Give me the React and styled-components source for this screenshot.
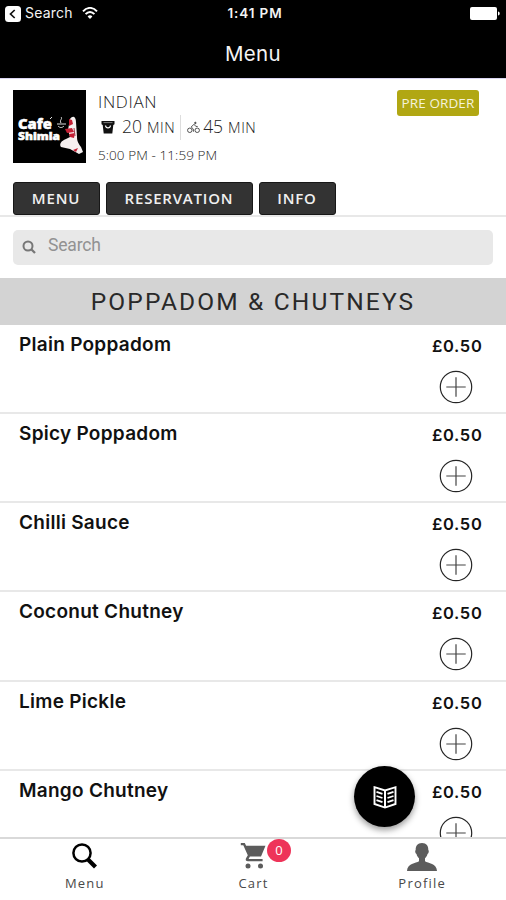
import React from "react";
import styled, { createGlobalStyle } from "styled-components";

const Global = createGlobalStyle`
  * { box-sizing: border-box; }
  html, body { margin: 0; padding: 0; background: #fff; overflow: hidden; }
`;

const Screen = styled.div`
  width: 506px;
  height: 900px;
  display: flex;
  flex-direction: column;
  overflow: hidden;
  background: #fff;
  color: #222;
  font-family: "Open Sans", sans-serif;
`;

const Header = styled.header`
  height: 79px;
  flex: none;
  background: #000;
  border-bottom: 1px solid #d9d5f2;
  color: #f4f4f4;
  font-family: Inter, sans-serif;
`;

const StatusBar = styled.div`
  height: 26px;
  display: grid;
  grid-template-columns: 1fr auto 1fr;
  align-items: center;
  padding: 0 6px 0 5px;
`;

const StatusLeft = styled.div`
  display: flex;
  align-items: center;
  line-height: 24px;
  svg { flex: none; }
`;

const BackLabel = styled.span`
  margin: 0 9px 1px 4px;
  font-size: 14px;
  letter-spacing: 0.2px;
`;

const Clock = styled.div`
  padding-left: 5px;
  font-size: 13.5px;
  font-weight: 600;
  line-height: 27px;
  letter-spacing: 0.9px;
`;

const StatusRight = styled.div`
  display: flex;
  justify-content: flex-end;
`;

const Title = styled.h1`
  margin: 0;
  font-size: 20.5px;
  font-weight: 400;
  line-height: 55px;
  letter-spacing: 0.35px;
  text-align: center;
`;

const Restaurant = styled.section`
  height: 103px;
  flex: none;
  display: flex;
  align-items: flex-start;
  padding: 11px 27px 0 13px;
`;

const Details = styled.div`
  flex: 1;
  padding-left: 12px;
`;

const Cuisine = styled.div`
  font-size: 17px;
  font-weight: 300;
  line-height: 24px;
  letter-spacing: 0.65px;
`;

const Times = styled.div`
  height: 26px;
  display: flex;
  align-items: center;
  padding-left: 3px;
  font-weight: 300;
`;

const Duration = styled.span`
  font-size: 17.5px;
  line-height: 26px;
  margin-left: ${(p) => p.$gap}px;
  small { font-size: 14.5px; margin-left: 5px; letter-spacing: 0.5px; }
`;

const Divider = styled.span`
  width: 1px;
  height: 25px;
  margin: 0 6px 0 5px;
  background: #ddd;
`;

const Hours = styled.div`
  padding-top: 5px;
  font-size: 13.5px;
  line-height: 20px;
  font-weight: 300;
  letter-spacing: 0.08px;
`;

const PreOrder = styled.span`
  width: 82px;
  height: 26px;
  border-radius: 3px;
  background: #b1a713;
  color: #f5f3dc;
  font-size: 13.5px;
  line-height: 27px;
  letter-spacing: 0.1px;
  text-align: center;
`;

const Tabs = styled.nav`
  height: 35px;
  flex: none;
  display: flex;
  gap: 6px;
  padding-left: 13px;
  border-bottom: 2px solid #e8e8e8;
`;

const Tab = styled.button`
  width: ${(p) => p.$width}px;
  height: 33px;
  padding: 0 1px 0 0;
  border: 1px solid #171717;
  border-radius: 3px;
  background: #333;
  color: #f0f0f0;
  font: 600 15px/31px "Open Sans", sans-serif;
  letter-spacing: 0.8px;
`;

const SearchBar = styled.label`
  height: 35px;
  flex: none;
  display: flex;
  align-items: center;
  margin: 13px 13px;
  padding-left: 9px;
  border-radius: 5px;
  background: #e8e8e8;
  svg { margin-bottom: 2px; }
`;

const SearchInput = styled.input`
  width: 400px;
  height: 29px;
  margin: 0 0 5px 12px;
  padding: 0;
  border: 0;
  outline: 0;
  background: transparent;
  font: 400 17.5px/29px Roboto, sans-serif;
  letter-spacing: -0.15px;
  &::placeholder { color: #929292; opacity: 1; }
`;

const Category = styled.h2`
  height: 46.6px;
  flex: none;
  margin: 0;
  background: #d3d3d3;
  color: #292929;
  font: 400 24.5px/47px Roboto, sans-serif;
  letter-spacing: 2.15px;
  text-align: center;
`;

const List = styled.main`
  flex: 1;
  min-height: 0;
  overflow: hidden;
`;

const Row = styled.article`
  height: 89.3px;
  display: flex;
  justify-content: space-between;
  padding: 5px 24px 0 19px;
  border-bottom: 2px solid #e8e8e8;
  font-family: Inter, sans-serif;
  color: #111;
`;

const Name = styled.h3`
  margin: 0;
  font-size: 19px;
  font-weight: 600;
  line-height: 29px;
  letter-spacing: 0.27px;
`;

const Purchase = styled.div`
  width: 51px;
  display: flex;
  flex-direction: column;
  align-items: flex-start;
`;

const Price = styled.span`
  padding-left: 1px;
  font-size: 16.5px;
  font-weight: 600;
  line-height: 33px;
  letter-spacing: 0.65px;
`;

const AddButton = styled.button`
  width: 34px;
  height: 34px;
  margin: 7px 0 0 8px;
  padding: 0;
  border: 0;
  background: none;
  svg { display: block; }
`;

const Fab = styled.button`
  position: absolute;
  left: 354px;
  top: 766px;
  width: 61px;
  height: 61px;
  display: grid;
  place-items: center;
  padding: 0;
  border: 0;
  border-radius: 50%;
  background: #000;
  box-shadow: 0 3px 6px rgba(0, 0, 0, 0.4);
`;

const BottomBar = styled.nav`
  height: 63px;
  flex: none;
  display: grid;
  grid-template-columns: repeat(3, 1fr);
  border-top: 2px solid #d9d9d9;
`;

const NavItem = styled.a`
  display: flex;
  flex-direction: column;
  align-items: center;
  padding-top: 4px;
  color: ${(p) => (p.$active ? "#000" : "#5c5c5c")};
`;

const NavLabel = styled.span`
  margin-top: -1px;
  padding-left: 1px;
  font-size: 13px;
  line-height: 20px;
  letter-spacing: 1.2px;
  color: #484848;
`;

const IconSlot = styled.span`
  position: relative;
  height: 31px;
  svg { display: block; }
`;

const Badge = styled.span`
  position: absolute;
  left: 27px;
  top: -4px;
  width: 24px;
  height: 23px;
  border-radius: 50%;
  background: #ee3459;
  color: #fff;
  font-size: 13px;
  line-height: 23px;
  text-align: center;
`;

const BackIcon = () => (
  <svg width="16" height="16" viewBox="0 0 16 16">
    <rect width="16" height="16" rx="3.5" fill="#fff" />
    <path d="M9.7 4 5.5 8l4.2 4" fill="none" stroke="#111" strokeWidth="1.7" />
  </svg>
);

const WifiIcon = () => (
  <svg width="16" height="13" viewBox="0 0 16 13" fill="none" stroke="#fff" strokeWidth="1.9">
    <path d="M1 4.4C5-.3 11-.3 15 4.4M3.6 7.2c2.6-3 6.2-3 8.8 0" />
    <path d="M5.6 9.4c1.4-1.5 3.4-1.5 4.8 0L8 12z" fill="#fff" stroke="none" />
  </svg>
);

const BatteryIcon = () => (
  <svg width="30" height="13" viewBox="0 0 30 13" fill="#fff">
    <rect width="27" height="13" rx="2" />
    <path d="M28 4.5c2.3.5 2.3 3.5 0 4z" />
  </svg>
);

const LogoArt = styled.svg`
  flex: none;
  display: block;
  background: #000;
  font-family: "Open Sans", sans-serif;
  font-weight: 800;
`;

const Logo = () => (
  <LogoArt width="73" height="73" viewBox="0 0 73 73">
    <g fill="#fff" stroke="#fff" strokeWidth=".5">
      <text x="5" y="38.5" fontSize="14" textLength="34" lengthAdjust="spacingAndGlyphs">Cafe</text>
      <text x="5" y="49.5" fontSize="10.5" textLength="42" lengthAdjust="spacingAndGlyphs">Shimla</text>
    </g>
    <path d="m37 29 2-2M48 27c2 2-2 3 0 6M44 34h9M45 36c2 2 4 2 6 0" stroke="#ddd" fill="none" />
    <path d="M57 29c3-4 6-2 6 3l1 15c0 5 2 7 4 10l2 5-4 2-9-5-9-2c-2-3 0-6 5-8l4-2-2-7z" fill="#f6f0f0" />
    <path d="m56 29 3 1 1 4-4 2zM52 39l7-1 2 4-7 1zM56 44l6-1-1 5-4-1zM60 60l5-2-2 4z" fill="#c52035" />
    <path d="m61 38 1 8" stroke="#a33a48" fill="none" />
  </LogoArt>
);

const BucketIcon = () => (
  <svg width="14" height="14" viewBox="0 0 14 14">
    <path d="M.5 1h13v3.2l-1.200.8-1 8.500H2.700L1.700 5 .5 4.200z" fill="#111" />
    <path d="M2.500 2.600h9" stroke="#999" strokeWidth=".8" />
    <path d="M4.500 5.500c.5 3.200 4.500 3.200 5 0" fill="none" stroke="#fff" strokeWidth="1.300" />
  </svg>
);

const BikeIcon = () => (
  <svg width="13" height="13" viewBox="0 0 14 13" fill="none" stroke="#444" strokeWidth="1">
    <circle cx="3" cy="9.5" r="2.4" />
    <circle cx="11" cy="9.5" r="2.4" />
    <path d="m7 11-.3-3L4.500 6l3-3 2 2.300 2 .1" />
    <circle cx="9" cy="1.6" r=".8" fill="#444" />
  </svg>
);

const SmallSearchIcon = () => (
  <svg width="14" height="14" viewBox="0 0 14 14" fill="none" stroke="#777">
    <circle cx="6" cy="6" r="4.5" strokeWidth="2" />
    <path d="m9 9 4 4" strokeWidth="2.3" />
  </svg>
);

const PlusIcon = () => (
  <svg width="34" height="34" viewBox="0 0 34 34" fill="none" stroke="#252525">
    <circle cx="17" cy="17" r="15.7" strokeWidth="1.2" />
    <path d="M17 7.3v19.4M7.3 17h19.4" strokeWidth="1.2" stroke="#444" />
  </svg>
);

const BookIcon = () => (
  <svg width="24" height="24" viewBox="0 0 24 24" fill="none" stroke="#fff">
    <path d="M1.5 2.2 12 5.5l10.5-3.3V19L12 22.6 1.5 19z" strokeWidth="1.9" />
    <path d="M12 5v17" strokeWidth="2" />
    <path d="m3.5 6.8 6 2M3.5 11l6 2M3.5 15.2l6 2M20.5 6.8l-6 2M20.5 11l-6 2M20.5 15.2l-6 2" strokeWidth="1.8" />
  </svg>
);

const MenuSearchIcon = () => (
  <svg width="25" height="27" viewBox="0 0 25 27" fill="none" stroke="currentColor">
    <circle cx="10" cy="10" r="8.6" strokeWidth="2.5" />
    <path d="m16 16.500 7.500 7.500" strokeWidth="4.2" />
  </svg>
);

const CartIcon = () => (
  <svg width="26" height="27" viewBox="0 0 26 27" fill="currentColor">
    <path d="M.8 0h4l1.300 2.700H25.500L21 13.500H9.900l-1.300 2.400h14v2.300H7.800c-2.200 0-2.500-1.600-1.600-3.200l1.600-2.800L3.300 2.300H.8z" />
    <circle cx="8" cy="22.900" r="2.500" />
    <circle cx="20.500" cy="22.900" r="2.500" />
  </svg>
);

const ProfileIcon = () => (
  <svg width="30" height="29" viewBox="0 0 30 30" preserveAspectRatio="none" fill="currentColor">
    <path d="M15 0c4.500 0 6.500 3 6.300 7.300 1 .8.500 3.500-.8 4.200-.5 2.300-1.500 3.400-2.500 4.200v3.200c3 2 11.800 2.300 12 10.100H0c.2-7.800 9-8.100 12-10.100v-3.200c-1-.8-2-1.900-2.500-4.200-1.300-.7-1.800-3.400-.8-4.200C8.500 3 10.500 0 15 0z" />
  </svg>
);

const dishes = ["Plain Poppadom", "Spicy Poppadom", "Chilli Sauce", "Coconut Chutney", "Lime Pickle", "Mango Chutney"];

export default function App() {
  return (
    <Screen>
      <Global />
      <Header>
        <StatusBar>
          <StatusLeft><BackIcon /><BackLabel>Search</BackLabel><WifiIcon /></StatusLeft>
          <Clock>1:41 PM</Clock>
          <StatusRight><BatteryIcon /></StatusRight>
        </StatusBar>
        <Title>Menu</Title>
      </Header>
      <Restaurant>
        <Logo />
        <Details>
          <Cuisine>INDIAN</Cuisine>
          <Times>
            <BucketIcon />
            <Duration $gap={7}>20<small>MIN</small></Duration>
            <Divider />
            <BikeIcon />
            <Duration $gap={3}>45<small>MIN</small></Duration>
          </Times>
          <Hours>5:00 PM - 11:59 PM</Hours>
        </Details>
        <PreOrder>PRE ORDER</PreOrder>
      </Restaurant>
      <Tabs>
        <Tab $width={87}>MENU</Tab>
        <Tab $width={147}>RESERVATION</Tab>
        <Tab $width={77}>INFO</Tab>
      </Tabs>
      <SearchBar>
        <SmallSearchIcon />
        <SearchInput placeholder="Search" />
      </SearchBar>
      <Category>POPPADOM &amp; CHUTNEYS</Category>
      <List>
        {dishes.map((dish) => (
          <Row key={dish}>
            <Name>{dish}</Name>
            <Purchase>
              <Price>£0.50</Price>
              <AddButton aria-label={`Add ${dish}`}><PlusIcon /></AddButton>
            </Purchase>
          </Row>
        ))}
      </List>
      <BottomBar>
        <NavItem $active>
          <IconSlot><MenuSearchIcon /></IconSlot>
          <NavLabel>Menu</NavLabel>
        </NavItem>
        <NavItem>
          <IconSlot><CartIcon /><Badge>0</Badge></IconSlot>
          <NavLabel>Cart</NavLabel>
        </NavItem>
        <NavItem>
          <IconSlot><ProfileIcon /></IconSlot>
          <NavLabel>Profile</NavLabel>
        </NavItem>
      </BottomBar>
      <Fab aria-label="Menu categories"><BookIcon /></Fab>
    </Screen>
  );
}
